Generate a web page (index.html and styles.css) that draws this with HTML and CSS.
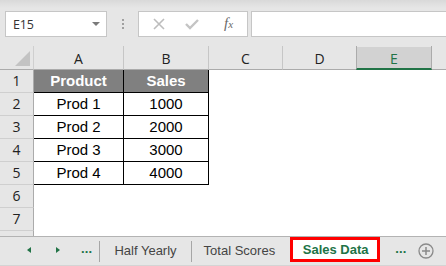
FILE: index.html
```html
<!DOCTYPE html>
<html>
<head>
<meta charset="utf-8">
<link rel="stylesheet" href="styles.css">
</head>
<body>
<div class="app">
  <div class="toolbar">
    <div class="namebox"><span class="ref">E15</span><span class="caret"></span></div>
    <div class="grip"><i></i><i></i><i></i></div>
    <div class="fxbox">
      <svg class="ic-x" width="12" height="12" viewBox="0 0 12 12"><path d="M1 1 L11 11 M11 1 L1 11" stroke="#bdbdbd" stroke-width="1.6" fill="none"/></svg>
      <svg class="ic-check" width="14" height="12" viewBox="0 0 14 12"><path d="M1 6 L5 10 L13 2" stroke="#c4c4c4" stroke-width="2.4" fill="none"/></svg>
      <span class="fx">f<small>x</small></span>
    </div>
    <div class="formula"></div>
  </div>

  <div class="sheet">
    <div class="row hdr">
      <div class="rh corner"><span class="tri"></span></div>
      <div class="ch w-a">A</div>
      <div class="ch w-b">B</div>
      <div class="ch w-c">C</div>
      <div class="ch w-d">D</div>
      <div class="ch w-e sel">E</div>
      <div class="ch w-f"></div>
    </div>
    <div class="row">
      <div class="rh">1</div>
      <div class="c w-a t th">Product</div>
      <div class="c w-b t th">Sales</div>
      <div class="c w-rest"></div>
    </div>
    <div class="row">
      <div class="rh">2</div>
      <div class="c w-a t">Prod 1</div>
      <div class="c w-b t">1000</div>
      <div class="c w-rest"></div>
    </div>
    <div class="row">
      <div class="rh">3</div>
      <div class="c w-a t">Prod 2</div>
      <div class="c w-b t">2000</div>
      <div class="c w-rest"></div>
    </div>
    <div class="row">
      <div class="rh">4</div>
      <div class="c w-a t">Prod 3</div>
      <div class="c w-b t">3000</div>
      <div class="c w-rest"></div>
    </div>
    <div class="row">
      <div class="rh">5</div>
      <div class="c w-a t">Prod 4</div>
      <div class="c w-b t">4000</div>
      <div class="c w-rest"></div>
    </div>
    <div class="row">
      <div class="rh">6</div>
      <div class="c w-full"></div>
    </div>
    <div class="row">
      <div class="rh">7</div>
      <div class="c w-full"></div>
    </div>
    <div class="row">
      <div class="rh"></div>
      <div class="c w-full"></div>
    </div>
  </div>

  <div class="tabs">
    <span class="arr left"></span>
    <span class="arr right"></span>
    <span class="more">...</span>
    <span class="sep"></span>
    <span class="tab tab1">Half Yearly</span>
    <span class="sep"></span>
    <span class="tab tab2">Total Scores</span>
    <span class="tab active">Sales Data</span>
    <span class="more more2">...</span>
    <svg class="plus" width="16" height="16" viewBox="0 0 16 16"><circle cx="8" cy="8" r="7" stroke="#8a8a8a" stroke-width="1.3" fill="none"/><path d="M8 4 V12 M4 8 H12" stroke="#8a8a8a" stroke-width="1.5"/></svg>
  </div>
</div>
</body>
</html>
```

FILE: styles.css
```css
html, body {
  margin: 0;
  padding: 0;
}
body {
  width: 446px;
  height: 266px;
  overflow: hidden;
  background: #e6e6e6;
  font-family: "Liberation Sans", Arial, sans-serif;
}
.app {
  width: 446px;
  height: 266px;
  display: flex;
  flex-direction: column;
}

/* toolbar */
.toolbar {
  height: 46px;
  box-sizing: border-box;
  padding: 11px 0 0 5px;
  display: flex;
  align-items: flex-start;
  background: linear-gradient(#d9d9d9 0px, #e6e6e6 8px, #e6e6e6 100%);
  flex: none;
}
.namebox {
  width: 102px;
  height: 26px;
  box-sizing: border-box;
  background: #fff;
  border: 1px solid #c6c6c6;
  display: flex;
  align-items: center;
  padding-left: 7px;
  position: relative;
}
.ref {
  font-family: "Open Sans", "Liberation Sans", sans-serif;
  font-size: 12.5px;
  color: #333;
  letter-spacing: -0.2px;
}
.caret {
  position: absolute;
  right: 6px;
  top: 10px;
  width: 0;
  height: 0;
  border-left: 4px solid transparent;
  border-right: 4px solid transparent;
  border-top: 4px solid #7a7a7a;
}
.grip {
  width: 31px;
  height: 26px;
  display: flex;
  flex-direction: column;
  align-items: center;
  justify-content: center;
  gap: 2px;
}
.grip i {
  display: block;
  width: 2px;
  height: 2px;
  background: #a0a0a0;
}
.fxbox {
  width: 110px;
  height: 26px;
  box-sizing: border-box;
  background: #fff;
  border: 1px solid #c6c6c6;
  display: flex;
  align-items: center;
  position: relative;
}
.ic-x { position: absolute; left: 14px; top: 6px; }
.ic-check { position: absolute; left: 46px; top: 6px; }
.fx {
  position: absolute;
  left: 85px;
  top: 3px;
  font-family: "Liberation Serif", "Times New Roman", serif;
  font-style: italic;
  font-size: 15px;
  color: #6a6a6a;
}
.fx small { font-size: 11px; }
.formula {
  margin-left: 3px;
  flex: 1;
  height: 26px;
  box-sizing: border-box;
  background: #fff;
  border: 1px solid #c6c6c6;
  border-right: none;
}

/* sheet */
.sheet {
  height: 190px;
  overflow: hidden;
  background: #fff;
  flex: none;
}
.row {
  display: flex;
  height: 23px;
}
.row.hdr {
  height: 24px;
  background: #e6e6e6;
}
.rh {
  width: 34px;
  flex: none;
  box-sizing: border-box;
  height: 23px;
  background: #e6e6e6;
  border-right: 1px solid #ababab;
  border-bottom: 1px solid #cfcfcf;
  font-family: "Open Sans", "Liberation Sans", sans-serif;
  font-size: 14px;
  color: #222;
  text-align: center;
  line-height: 22px;
}
.rh.corner {
  height: 24px;
  border-bottom: 1px solid #ababab;
  border-right: 1px solid #cfcfcf;
  position: relative;
}
.tri {
  position: absolute;
  right: 3px;
  bottom: 3px;
  width: 0;
  height: 0;
  border-left: 15px solid transparent;
  border-bottom: 15px solid #c3c3c3;
}
.ch {
  flex: none;
  box-sizing: border-box;
  height: 24px;
  border-right: 1px solid #c6c6c6;
  border-bottom: 1px solid #ababab;
  font-family: "Open Sans", "Liberation Sans", sans-serif;
  font-size: 14px;
  color: #222;
  text-align: center;
  line-height: 23px;
  padding-top: 1px;
}
.ch.sel {
  background: linear-gradient(#e6e6e6 0, #e6e6e6 1px, #d2d2d2 1px);
  border-left: 1px solid #ababab;
  border-right: 1px solid #ababab;
  border-bottom: 2px solid #217346;
  color: #217346;
  margin-left: -1px;
  width: 76px;
}
.w-a { width: 90px; }
.w-b { width: 85px; }
.w-c { width: 74px; }
.w-d { width: 74px; }
.w-e { width: 74px; }
.w-f { flex: 1; border-right: none; }
.w-rest { flex: 1; }
.w-full { flex: 1; }

.c {
  box-sizing: border-box;
  height: 23px;
}
.c.t {
  flex: none;
  border-right: 1px solid #000;
  border-bottom: 1px solid #000;
  font-size: 15px;
  color: #000;
  text-align: center;
  line-height: 22px;
}
.c.th {
  background: #808080;
  color: #fff;
  font-weight: bold;
}

/* tabs */
.tabs {
  flex: 1;
  box-sizing: border-box;
  border-top: 1px solid #b3b3b3;
  border-bottom: 1px solid #d4d4d4;
  display: flex;
  align-items: flex-start;
  background: #e6e6e6;
}
.arr {
  flex: none;
  width: 0;
  height: 0;
  margin-top: 10px;
  border-top: 3.5px solid transparent;
  border-bottom: 3.5px solid transparent;
}
.arr.left {
  margin-left: 27px;
  border-right: 4px solid #217346;
}
.arr.right {
  margin-left: 25px;
  border-left: 4px solid #217346;
}
.more {
  flex: none;
  margin-left: 21px;
  margin-top: 4px;
  font-size: 13px;
  font-weight: bold;
  color: #217346;
  letter-spacing: 0.2px;
}
.sep {
  flex: none;
  width: 1px;
  height: 21px;
  margin-top: 4px;
  background: #a6a6a6;
  margin-left: 7px;
}
.tab {
  flex: none;
  font-size: 13px;
  color: #444;
  margin-top: 6px;
  margin-left: 14px;
}
.tab1 { margin-right: 7px; }
.tab2 { margin-left: 12px; }
.tab.active {
  margin: 0 0 0 15px;
  height: 25px;
  box-sizing: border-box;
  border: 3px solid #ff0000;
  background: #fff;
  color: #217346;
  font-weight: bold;
  width: 90px;
  text-align: center;
  line-height: 19px;
  padding-left: 1px;
}
.more2 {
  margin-left: 15px;
}
.plus {
  flex: none;
  margin-left: 11px;
  margin-top: 6px;
}
```
